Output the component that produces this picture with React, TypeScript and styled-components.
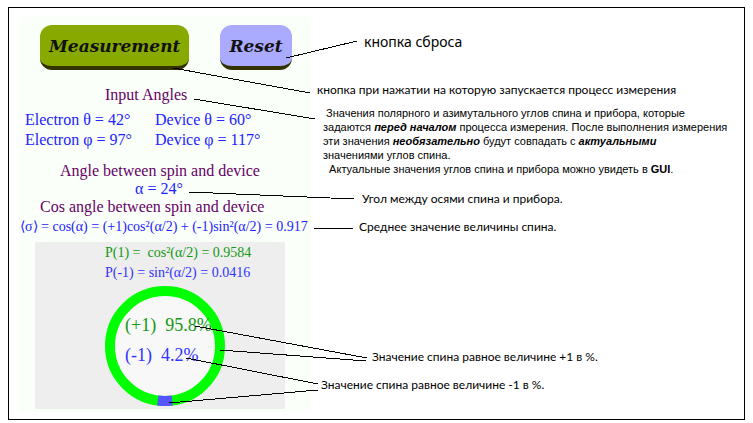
import React from "react";
import styled, { createGlobalStyle } from "styled-components";

const GlobalStyle = createGlobalStyle`
  * { box-sizing: border-box; }
  body { margin: 0; background: #fff; }
`;

const Frame = styled.main`
  position: relative;
  display: flex;
  margin: 7px 8px 0;
  padding: 9px 10px 7px;
  border: 1px solid #000;
  color: #000;
`;

const Panel = styled.section`
  flex: 0 0 292px;
  padding: 8px 0 3px;
  background: #fbfffa;
  font-family: "Liberation Serif", serif;
  font-size: 16px;
  line-height: 18px;
  color: #22f;
  white-space: pre;
`;

const Toolbar = styled.div`
  display: flex;
  gap: 31px;
  padding-left: 21px;
`;

const ActionButton = styled.button<{ $fill: string }>`
  height: 45px;
  padding: 0 9px;
  border: 0;
  border-bottom: 4px solid #330;
  border-radius: 12px;
  background: ${(p) => p.$fill};
  color: #111;
  font: italic bold 17px "DejaVu Serif", serif;
`;

const Heading = styled.h2<{ $indent: number }>`
  margin: 0;
  padding-left: ${(p) => p.$indent}px;
  font-size: inherit;
  font-weight: normal;
  color: #606;
`;

const Inputs = styled.section`
  padding: 16px 0 12px;
`;

const AngleGrid = styled.div`
  display: grid;
  grid-template-columns: 130px 1fr;
  padding: 6px 0 0 6px;
  line-height: 20px;
`;

const Value = styled.div`
  padding-left: 116px;
`;

const Formula = styled.div`
  padding: 2px 0 1px 1px;
  font-size: 14px;
`;

const Chart = styled.section`
  margin: 5px 26px 0 16px;
  padding: 1px 0 0 70px;
  background: #eee;
`;

const Probability = styled.div<{ $color: string }>`
  color: ${(p) => p.$color};
  font-size: 14px;
  line-height: 20px;
`;

const Donut = styled.div`
  position: relative;
  width: 120px;
  padding: 3px 0 3px;

  svg { display: block; }
`;

const Shares = styled.div`
  position: absolute;
  top: 27px;
  left: 20px;
  font-size: 18px;
  line-height: 30px;
`;

const Share = styled.div<{ $color: string }>`
  color: ${(p) => p.$color};
`;

const Notes = styled.section`
  flex: 1;
  min-width: 0;
  line-height: 18px;
  white-space: pre;
`;

const Note = styled.p<{ $indent: number; $gap: number }>`
  margin: ${(p) => p.$gap}px 0 0 ${(p) => p.$indent}px;
  font-family: Lato, "Noto Sans", sans-serif;
  font-size: 12px;
`;

const LargeNote = styled(Note)`
  font-family: "Noto Sans", sans-serif;
  font-size: 14px;
`;

const Details = styled.div`
  margin: 7px 0 0 12px;
  font-family: "Liberation Sans", sans-serif;
  font-size: 11px;
  line-height: 14px;

  p { margin: 0; }
  em { font-weight: bold; }
`;

const Pointers = styled.svg`
  position: absolute;
  top: -8px;
  left: -9px;
  pointer-events: none;
`;

const pointers = [
  [286, 58, 357, 41],
  [173, 68, 310, 93],
  [194, 99, 315, 119],
  [189, 192, 354, 199],
  [313, 228, 353, 229],
  [195, 326, 367, 358],
  [220, 350, 366, 361],
  [186, 358, 318, 384],
  [169, 403, 318, 390],
];

export default function App() {
  return (
    <>
      <GlobalStyle />
      <Frame>
        <Panel>
          <Toolbar>
            <ActionButton $fill="#8a0">Measurement</ActionButton>
            <ActionButton $fill="#aaf">Reset</ActionButton>
          </Toolbar>
          <Inputs>
            <Heading $indent={86}>Input Angles</Heading>
            <AngleGrid>
              <span>Electron θ = 42°</span>
              <span>Device θ = 60°</span>
              <span>Electron φ = 97°</span>
              <span>Device φ = 117°</span>
            </AngleGrid>
          </Inputs>
          <Heading $indent={41}>Angle between spin and device</Heading>
          <Value>α = 24°</Value>
          <Heading $indent={21}>Cos angle between spin and device</Heading>
          <Formula>⟨σ⟩ = cos(α) = (+1)cos²(α/2) + (-1)sin²(α/2) = 0.917</Formula>
          <Chart>
            <Probability $color="#191">{"P(1) =  cos²(α/2) = 0.9584"}</Probability>
            <Probability $color="#33f">P(-1) = sin²(α/2) = 0.0416</Probability>
            <Donut>
              <svg width="120" height="120" viewBox="0 0 120 120" aria-hidden="true">
                <circle cx="60" cy="60" r="55" fill="#f8f8f8" stroke="#0f0" strokeWidth="10" />
                <path d="M52.8 114.5 A55 55 0 0 0 67.2 114.5" fill="none" stroke="#55f" strokeWidth="10" />
              </svg>
              <Shares>
                <Share $color="#191">{"(+1)  95.8%"}</Share>
                <Share $color="#33f">{"(-1)  4.2%"}</Share>
              </Shares>
            </Donut>
          </Chart>
        </Panel>
        <Notes>
          <LargeNote $indent={53} $gap={16}>кнопка сброса</LargeNote>
          <Note $indent={6} $gap={30}>кнопка при нажатии на которую запускается процесс измерения</Note>
          <Details>
            <p>{" Значения полярного и азимутального углов спина и прибора, которые"}</p>
            <p>задаются <em>перед началом</em> процесса измерения. После выполнения измерения</p>
            <p>эти значения <em>необязательно</em> будут совпадать с <em>актуальными</em></p>
            <p>значениями углов спина.</p>
            <p>{"  Актуальные значения углов спина и прибора можно увидеть в "}<b>GUI</b>.</p>
          </Details>
          <Note $indent={51} $gap={14}>Угол между осями спина и прибора.</Note>
          <Note $indent={48} $gap={10}>Среднее значение величины спина.</Note>
          <Note $indent={61} $gap={112}>Значение спина равное величине +1 в %.</Note>
          <Note $indent={10} $gap={10}>Значение спина равное величине -1 в %.</Note>
        </Notes>
        <Pointers width="400" height="412" viewBox="0 0 400 412" aria-hidden="true">
          <g stroke="#000" shapeRendering="crispEdges">
            {pointers.map(([x1, y1, x2, y2]) => (
              <line key={`${x1}-${y1}`} x1={x1} y1={y1} x2={x2} y2={y2} />
            ))}
          </g>
        </Pointers>
      </Frame>
    </>
  );
}
